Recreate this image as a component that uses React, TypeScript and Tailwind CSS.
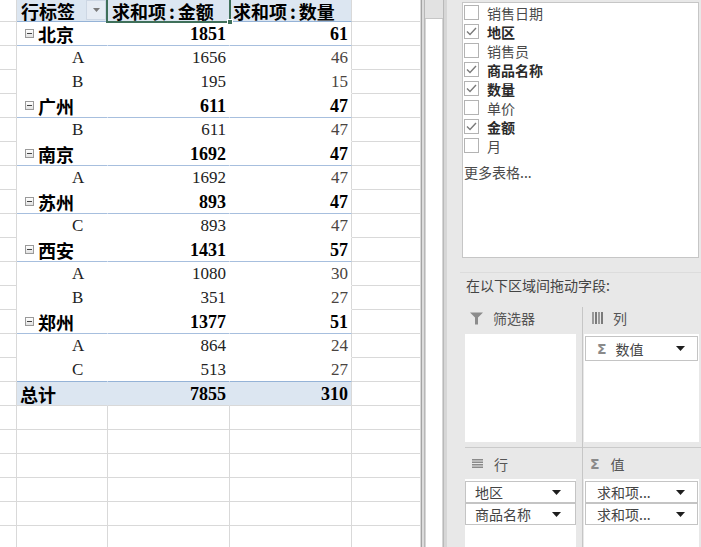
import React from 'react';

type R = { t: 'g' | 'i'; label: string; a: number; b: number };

const rows: R[] = [
  { t: 'g', label: '北京', a: 1851, b: 61 },
  { t: 'i', label: 'A', a: 1656, b: 46 },
  { t: 'i', label: 'B', a: 195, b: 15 },
  { t: 'g', label: '广州', a: 611, b: 47 },
  { t: 'i', label: 'B', a: 611, b: 47 },
  { t: 'g', label: '南京', a: 1692, b: 47 },
  { t: 'i', label: 'A', a: 1692, b: 47 },
  { t: 'g', label: '苏州', a: 893, b: 47 },
  { t: 'i', label: 'C', a: 893, b: 47 },
  { t: 'g', label: '西安', a: 1431, b: 57 },
  { t: 'i', label: 'A', a: 1080, b: 30 },
  { t: 'i', label: 'B', a: 351, b: 27 },
  { t: 'g', label: '郑州', a: 1377, b: 51 },
  { t: 'i', label: 'A', a: 864, b: 24 },
  { t: 'i', label: 'C', a: 513, b: 27 },
];

const fields = [
  { name: '销售日期', on: false },
  { name: '地区', on: true },
  { name: '销售员', on: false },
  { name: '商品名称', on: true },
  { name: '数量', on: true },
  { name: '单价', on: false },
  { name: '金额', on: true },
  { name: '月', on: false },
];

function Collapse() {
  return (
    <div className="w-[9px] h-[9px] border border-[#9a9a9a] bg-gradient-to-b from-white to-[#e2e2e2] flex items-center justify-center shrink-0">
      <div className="w-[5px] h-px bg-[#444]" />
    </div>
  );
}

function Tri() {
  return (
    <svg width="9" height="5" viewBox="0 0 9 5" className="shrink-0">
      <polygon points="0,0 9,0 4.5,5" fill="#1e1e1e" />
    </svg>
  );
}

function Check({ on }: { on: boolean }) {
  return (
    <div className="w-[15px] h-[15px] border border-[#b3b3b3] bg-white shrink-0 flex items-center justify-center">
      {on && (
        <svg width="11" height="9" viewBox="0 0 11 9">
          <polyline points="1,4.5 4,7.5 10,1" fill="none" stroke="#7a7a7a" strokeWidth="1.4" />
        </svg>
      )}
    </div>
  );
}

function HeadText({ a, b }: { a: string; b: string }) {
  return (
    <span className="leading-none">
      {a}
      <span className="mx-[3px]">:</span>
      {b}
    </span>
  );
}

function Sheet() {
  const empty = Array.from({ length: 6 });
  return (
    <div className="w-[421px] h-full shrink-0 flex flex-col overflow-hidden bg-white font-['Liberation_Serif','Noto_Sans_CJK_SC',serif] text-black">
      {/* header */}
      <div className="flex h-[22px] shrink-0">
        <div className="w-[17px] border-r border-b border-[#d9d9d9]" />
        <div className="relative w-[91px] bg-[#dce6f1] border-b border-b-[#95b3d7] border-r border-r-[#dce6f1] pl-[4px] pt-[1px] flex items-center font-['Noto_Sans_CJK_SC',sans-serif] font-bold text-[18px] leading-none">
          行标签
          <div className="absolute right-[1px] top-0 w-[20px] h-[20px] bg-[#e6ecf4] border border-[#cdd7e4] flex items-center justify-center">
            <svg width="7" height="4" viewBox="0 0 7 4">
              <polygon points="0,0 7,0 3.5,4" fill="#7a7a7a" />
            </svg>
          </div>
        </div>
        <div className="relative w-[122px] bg-[#dce6f1] border-b border-b-[#95b3d7] border-r border-r-[#dce6f1] pl-[4px] pt-[1px] flex items-center font-['Noto_Sans_CJK_SC',sans-serif] font-bold text-[18px] leading-none">
          <HeadText a="求和项" b="金额" />
          <div className="absolute left-[-2px] top-[-2px] right-[-2px] bottom-[-2px] border-2 border-[#3f705a]" />
          <div className="absolute right-[-4px] bottom-[-4px] w-[6px] h-[6px] bg-[#3f705a] border border-white" />
        </div>
        <div className="w-[122px] bg-[#dce6f1] border-b border-b-[#95b3d7] border-r border-r-[#d9d9d9] pl-[3px] pt-[1px] flex items-center font-['Noto_Sans_CJK_SC',sans-serif] font-bold text-[18px] leading-none">
          <HeadText a="求和项" b="数量" />
        </div>
        <div className="w-[69px] border-r border-b border-[#d9d9d9]" />
      </div>

      {rows.map((r, i) => {
        const last = i === rows.length - 1;
        const line = r.t === 'g' ? 'border-b-[#a7bfde]' : last ? 'border-b-[#95b3d7]' : 'border-b-white';
        const g = r.t === 'g';
        return (
          <div key={i} className="flex h-[24px] shrink-0">
            <div className="w-[17px] border-r border-b border-[#d9d9d9]" />
            <div className={`w-[91px] border-b ${line} border-r border-r-white flex items-center`}>
              {g ? (
                <div className="flex items-center pl-[8px]">
                  <Collapse />
                  <span className="ml-[4px] font-['Noto_Sans_CJK_SC',sans-serif] font-bold text-[18px] leading-none">{r.label}</span>
                </div>
              ) : (
                <span className="pl-[55px] text-[17px] leading-none text-[#222]">{r.label}</span>
              )}
            </div>
            <div className={`w-[122px] border-b ${line} border-r border-r-white flex items-center justify-end pr-[3px] leading-none ${g ? 'font-bold text-black text-[18px]' : 'text-[#222] text-[17px]'}`}>
              {r.a}
            </div>
            <div className={`w-[122px] border-b ${line} border-r border-r-[#d9d9d9] flex items-center justify-end pr-[3px] leading-none ${g ? 'font-bold text-black text-[18px]' : 'text-[#4a4440] text-[17px]'}`}>
              {r.b}
            </div>
            <div className="w-[69px] border-r border-b border-[#d9d9d9]" />
          </div>
        );
      })}

      {/* total */}
      <div className="flex h-[24px] shrink-0">
        <div className="w-[17px] border-r border-b border-[#d9d9d9]" />
        <div className="w-[91px] bg-[#dce6f1] border-b border-b-[#d9d9d9] border-r border-r-[#dce6f1] pl-[3px] flex items-center font-['Noto_Sans_CJK_SC',sans-serif] font-bold text-[18px] leading-none">
          总计
        </div>
        <div className="w-[122px] bg-[#dce6f1] border-b border-b-[#d9d9d9] border-r border-r-[#dce6f1] flex items-center justify-end pr-[3px] font-bold text-[18px] leading-none">
          7855
        </div>
        <div className="w-[122px] bg-[#dce6f1] border-b border-b-[#d9d9d9] border-r border-r-[#d9d9d9] flex items-center justify-end pr-[3px] font-bold text-[18px] leading-none">
          310
        </div>
        <div className="w-[69px] border-r border-b border-[#d9d9d9]" />
      </div>

      {empty.map((_, i) => (
        <div key={i} className="flex h-[24px] shrink-0">
          <div className="w-[17px] border-r border-b border-[#d9d9d9]" />
          <div className="w-[91px] border-r border-b border-[#d9d9d9]" />
          <div className="w-[122px] border-r border-b border-[#d9d9d9]" />
          <div className="w-[122px] border-r border-b border-[#d9d9d9]" />
          <div className="w-[69px] border-r border-b border-[#d9d9d9]" />
        </div>
      ))}
    </div>
  );
}

function FilterIcon() {
  return (
    <svg width="13" height="13" viewBox="0 0 13 13">
      <path d="M0 0.5 H13 L8 5.5 V12.5 L5 12.5 V5.5 Z" fill="#8c8c8c" />
    </svg>
  );
}

function ColsIcon() {
  return (
    <svg width="11" height="12" viewBox="0 0 11 12">
      <rect x="0" y="0" width="2" height="12" fill="#9a9a9a" />
      <rect x="3" y="0" width="2" height="12" fill="#7a7a7a" />
      <rect x="6" y="0" width="2" height="12" fill="#9a9a9a" />
      <rect x="9" y="0" width="2" height="12" fill="#7a7a7a" />
    </svg>
  );
}

function RowsIcon() {
  return (
    <svg width="11" height="9" viewBox="0 0 11 9">
      <rect x="0" y="0" width="11" height="1.5" fill="#8a8a8a" />
      <rect x="0" y="2.5" width="11" height="1.5" fill="#8a8a8a" />
      <rect x="0" y="5" width="11" height="1.5" fill="#8a8a8a" />
      <rect x="0" y="7.5" width="11" height="1.5" fill="#8a8a8a" />
    </svg>
  );
}

function Sigma() {
  return <span className="text-[#8a8a8a] font-bold text-[14px] leading-none font-['DejaVu_Sans',sans-serif]">Σ</span>;
}

function Item({ label, wide }: { label: string; wide?: boolean }) {
  return (
    <div className={`h-[22px] border border-[#c4c4c4] bg-white flex items-center justify-between ${wide ? 'pl-[11px] pr-[12px]' : 'pl-[9px] pr-[14px]'}`}>
      <span className="leading-none">{label}</span>
      <Tri />
    </div>
  );
}

function Panel() {
  return (
    <div className="w-[254px] h-full shrink-0 bg-[#e8e8e8] flex flex-col font-['Noto_Sans_CJK_SC',sans-serif] text-[14px] text-[#444]">
      <div className="ml-[15px] mt-[2px] w-[237px] h-[256px] shrink-0 bg-white border border-[#c6c6c6] pl-[1px]">
        {fields.map((f) => (
          <div key={f.name} className="flex items-center h-[19px]">
            <Check on={f.on} />
            <span className={`ml-[8px] leading-none ${f.on ? 'font-bold text-[#2a2a2a]' : 'text-[#4a4a4a]'}`}>{f.name}</span>
          </div>
        ))}
        <div className="mt-[8px] h-[18px] flex items-center leading-none text-[#4a4a4a]">更多表格...</div>
      </div>
      <div className="mt-[14px] ml-[13px] h-px bg-[#dcdcdc] shrink-0" />
      <div className="mt-[3px] pl-[19px] h-[18px] flex items-center leading-none text-[#444] shrink-0">在以下区域间拖动字段:</div>
      <div className="mt-[13px] flex flex-1 min-h-0">
        <div className="w-[135px] flex flex-col">
          <div className="h-[140px] pl-[18px] flex flex-col shrink-0">
            <div className="h-[27px] flex items-center pl-[5px] pb-[5px]">
              <FilterIcon />
              <span className="ml-[10px] leading-none text-[#555]">筛选器</span>
            </div>
            <div className="w-[111px] h-[108px] bg-white" />
          </div>
          <div className="ml-[18px] h-px bg-[#cacaca] shrink-0" />
          <div className="flex-1 pl-[18px] flex flex-col">
            <div className="h-[31px] flex items-center pl-[7px] shrink-0">
              <RowsIcon />
              <span className="ml-[11px] leading-none text-[#555]">行</span>
            </div>
            <div className="w-[111px] flex-1 bg-white pt-[2px]">
              <Item label="地区" />
              <Item label="商品名称" />
            </div>
          </div>
        </div>
        <div className="w-px bg-[#c6c6c6] shrink-0" />
        <div className="flex-1 flex flex-col">
          <div className="h-[140px] pl-[1px] flex flex-col shrink-0">
            <div className="h-[27px] flex items-center pl-[8px] pb-[5px]">
              <ColsIcon />
              <span className="ml-[10px] leading-none text-[#555]">列</span>
            </div>
            <div className="w-[115px] h-[108px] bg-white pt-[2px] pl-[1px]">
              <div className="w-[113px] h-[25px] border border-[#c4c4c4] bg-white flex items-center pl-[11px] pr-[12px]">
                <Sigma />
                <span className="ml-[9px] leading-none flex-1">数值</span>
                <Tri />
              </div>
            </div>
          </div>
          <div className="h-px bg-[#cacaca] shrink-0" />
          <div className="flex-1 pl-[1px] flex flex-col">
            <div className="h-[31px] flex items-center pl-[6px] shrink-0">
              <Sigma />
              <span className="ml-[11px] leading-none text-[#555]">值</span>
            </div>
            <div className="w-[115px] flex-1 bg-white pt-[2px] pl-[1px]">
              <div className="w-[113px]">
                <Item label="求和项..." wide />
                <Item label="求和项..." wide />
              </div>
            </div>
          </div>
        </div>
      </div>
    </div>
  );
}

export default function App() {
  return (
    <div className="w-[701px] h-[547px] flex overflow-hidden bg-white">
      <Sheet />
      <div className="w-[4px] h-full shrink-0 border-l border-r border-l-[#a3a3a3] border-r-[#b8b8b8] bg-[#dcdcdc]" />
      <div className="w-[18px] h-full shrink-0 flex flex-col bg-white">
        <div className="h-[19px] bg-[#e2e2e2] border-b border-[#c6c6c6] shrink-0" />
        <div className="flex-1 border-x border-[#d6d6d6] bg-white" />
      </div>
      <div className="w-[4px] h-full shrink-0 border-l border-[#b9b9b9] bg-[#d6d6d6]" />
      <Panel />
    </div>
  );
}
